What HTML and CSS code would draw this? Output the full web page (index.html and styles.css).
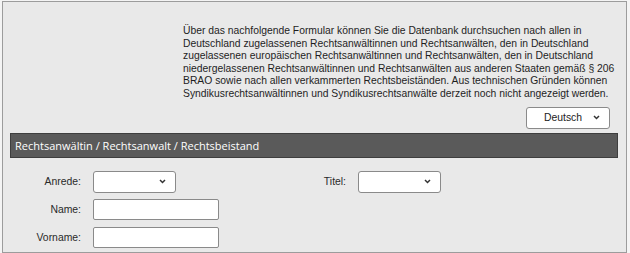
FILE: index.html
```html
<!DOCTYPE html>
<html lang="de">
<head>
<meta charset="utf-8">
<title>Anwaltssuche</title>
<link rel="stylesheet" href="styles.css">
</head>
<body>
<div class="frame">
  <p class="intro">Über das nachfolgende Formular können Sie die Datenbank durchsuchen nach allen in<br>Deutschland zugelassenen Rechtsanwältinnen und Rechtsanwälten, den in Deutschland<br>zugelassenen europäischen Rechtsanwältinnen und Rechtsanwälten, den in Deutschland<br>niedergelassenen Rechtsanwältinnen und Rechtsanwälten aus anderen Staaten gemäß § 206<br>BRAO sowie nach allen verkammerten Rechtsbeiständen. Aus technischen Gründen können<br>Syndikusrechtsanwältinnen und Syndikusrechtsanwälte derzeit noch nicht angezeigt werden.</p>
  <div class="lang-row">
    <div class="select lang"><span class="val">Deutsch</span><svg class="chev" width="7" height="5" viewBox="0 0 7 5"><path d="M1 1 L3.5 3.5 L6 1" fill="none" stroke="#333" stroke-width="1.5"/></svg></div>
  </div>
  <div class="bar">Rechtsanwältin / Rechtsanwalt / Rechtsbeistand</div>
  <div class="form">
    <label class="lbl">Anrede:</label>
    <div class="field"><div class="select small"><span class="val"></span><svg class="chev" width="7" height="5" viewBox="0 0 7 5"><path d="M1 1 L3.5 3.5 L6 1" fill="none" stroke="#333" stroke-width="1.5"/></svg></div></div>
    <label class="lbl">Titel:</label>
    <div class="field"><div class="select small"><span class="val"></span><svg class="chev" width="7" height="5" viewBox="0 0 7 5"><path d="M1 1 L3.5 3.5 L6 1" fill="none" stroke="#333" stroke-width="1.5"/></svg></div></div>
    <label class="lbl">Name:</label>
    <div class="field"><div class="input"></div></div>
    <span></span><span></span>
    <label class="lbl">Vorname:</label>
    <div class="field"><div class="input"></div></div>
  </div>
</div>
</body>
</html>
```
FILE: styles.css
```css
html, body {
  margin: 0;
  padding: 0;
  background: #f4f4f4;
}
body {
  width: 630px;
  height: 253px;
  overflow: hidden;
  font-family: "Liberation Sans", Arial, sans-serif;
  color: #222;
}
.frame {
  box-sizing: border-box;
  margin: 1px 0 0 2px;
  width: 625px;
  height: 252px;
  border: 1px solid #9c9c9c;
  background: #e9e9e9;
  overflow: hidden;
}
.intro {
  margin: 23px 0 0 180px;
  font-size: 10.35px;
  line-height: 12.6px;
  color: #1e1e1e;
  white-space: nowrap;
}
.lang-row {
  display: flex;
  justify-content: flex-end;
  padding-right: 16px;
  margin-top: 6px;
}
.select {
  box-sizing: border-box;
  display: flex;
  align-items: center;
  background: #fff;
  border: 1px solid #8a8a8a;
  border-radius: 3px;
}
.lang {
  width: 84px;
  height: 22px;
  font-size: 10.4px;
  color: #222;
}
.lang .val {
  flex: 1;
  text-align: center;
  padding-left: 6px;
}
.lang .chev { margin-right: 9px; }
.bar {
  box-sizing: border-box;
  margin: 4px 8px 0 7px;
  height: 25px;
  background: #5a5a5a;
  border: 1px solid #3e3e3e;
  color: #fff;
  font-family: "Open Sans", "Noto Sans", sans-serif;
  font-size: 11px;
  line-height: 23px;
  padding-left: 4px;
}
.form {
  display: grid;
  grid-template-columns: 78px 181px 60px 1fr;
  column-gap: 12px;
  row-gap: 6.5px;
  margin-top: 13px;
  align-items: center;
}
.lbl {
  text-align: right;
  font-size: 10.4px;
  color: #2a2a2a;
}
.small {
  width: 83px;
  height: 22px;
}
.small .val { flex: 1; }
.small .chev { margin-right: 9px; }
.input {
  box-sizing: border-box;
  width: 126px;
  height: 21px;
  background: #fff;
  border: 1px solid #8a8a8a;
  border-radius: 2px;
}
```
